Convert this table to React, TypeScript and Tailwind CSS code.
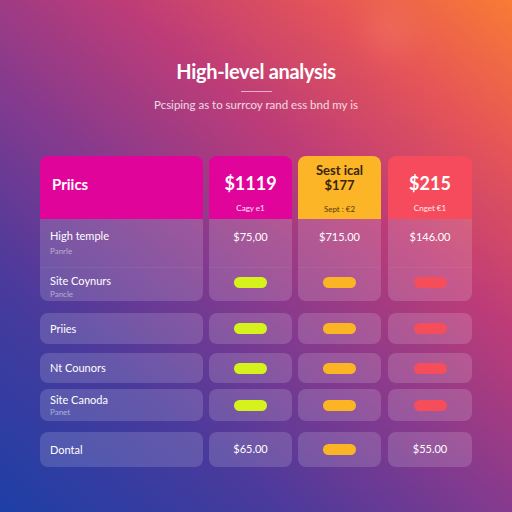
import React from "react";

type Cell = { kind: "text"; v: string } | { kind: "pill" };

const pillColors = ["bg-[#d6f21c]", "bg-[#fbb524]", "bg-[#f64d5a]"];

const rows: { label: string; sub?: string; cells: Cell[]; h: string; mt: string }[] = [
  { label: "Priies", cells: [{ kind: "pill" }, { kind: "pill" }, { kind: "pill" }], h: "h-[31px]", mt: "mt-[12px]" },
  { label: "Nt Counors", cells: [{ kind: "pill" }, { kind: "pill" }, { kind: "pill" }], h: "h-[30px]", mt: "mt-[9px]" },
  { label: "Site Canoda", sub: "Panet", cells: [{ kind: "pill" }, { kind: "pill" }, { kind: "pill" }], h: "h-[32px]", mt: "mt-[6px]" },
  { label: "Dontal", cells: [{ kind: "text", v: "$65.00" }, { kind: "pill" }, { kind: "text", v: "$55.00" }], h: "h-[35px]", mt: "mt-[11px]" },
];

function Pill({ i }: { i: number }) {
  return <div className={`w-[33px] h-[11px] rounded-full ${pillColors[i]}`} />;
}

export default function App() {
  const headers = [
    { bg: "bg-[#e1049b]", dark: false, lines: ["$1119"], sub: "Cagy e1" },
    { bg: "bg-[#fbb526]", dark: true, lines: ["Sest ical", "$177"], sub: "Sept : €2" },
    { bg: "bg-[#f64b5c]", dark: false, lines: ["$215"], sub: "Cnget €1" },
  ];
  const group1 = ["$75,00", "$715.00", "$146.00"];
  return (
    <div
      className="relative w-[512px] h-[512px] overflow-hidden text-white bg-[linear-gradient(40deg,#1d3fa6_0%,#4a3a9c_25%,#843a8e_45%,#bd3c78_65%,#e55458_83%,#f97b34_100%)]"
      style={{ fontFamily: "Lato, 'Open Sans', sans-serif" }}
    >
      <div className="absolute left-[365px] top-[5px] w-[50px] h-[50px] rounded-full bg-[#ff9a7a] opacity-20 blur-[14px]" />
      <div className="relative flex flex-col items-center pt-[58px]">
        <h1 className="text-[20px] leading-[26px] font-bold tracking-[-0.3px]">High-level analysis</h1>
        <div className="mt-[7px] w-[31px] h-[1px] bg-white/60" />
        <p className="mt-[6px] text-[11.5px] leading-[14px] text-white/80">Pcsiping as to surrcoy rand ess bnd my is</p>
      </div>
      <div className="relative ml-[40px] mt-[44px] flex gap-[6px]">
        <div className="w-[163px] flex flex-col">
          <div className="h-[63px] rounded-t-lg bg-[#e1049b] pl-[12px] pt-[16px]">
            <span className="text-[15px] font-bold">Priics</span>
          </div>
          <div className="h-[82px] rounded-b-lg bg-white/15 flex flex-col">
            <div className="h-[49px] pl-[10px] pt-[10px] border-b border-white/5">
              <div className="text-[11px] leading-[14px]">High temple</div>
              <div className="text-[8px] leading-[12px] mt-[2px] text-white/50">Panrle</div>
            </div>
            <div className="pl-[10px] pt-[6px]">
              <div className="text-[11px] leading-[14px]">Site Coynurs</div>
              <div className="text-[8px] leading-[10px] mt-[1px] text-white/50">Pancle</div>
            </div>
          </div>
          {rows.map((r) => (
            <div key={r.label} className={`${r.h} ${r.mt} rounded-lg bg-white/15 pl-[10px] flex flex-col justify-center`}>
              <div className="text-[11px] leading-[14px]">{r.label}</div>
              {r.sub && <div className="text-[8px] leading-[10px] text-white/50">{r.sub}</div>}
            </div>
          ))}
        </div>
        {headers.map((h, ci) => (
          <div key={ci} className={`${ci === 2 ? "w-[84px] ml-[1px]" : "w-[83px]"} flex flex-col`}>
            <div className={`h-[63px] rounded-t-lg ${h.bg} flex flex-col items-center ${h.dark ? "text-[#3a2410] pt-[7px]" : "pt-[15px]"}`}>
              {h.lines.length === 1 ? (
                <div className="text-[18px] leading-[24px] font-bold">{h.lines[0]}</div>
              ) : (
                <div className="text-[13px] leading-[15px] font-bold text-center">
                  {h.lines[0]}
                  <br />
                  {h.lines[1]}
                </div>
              )}
              <div className={`text-[8px] ${h.dark ? "mt-[10px] text-[#5a3a10]" : "mt-[7px] text-white/90"}`}>{h.sub}</div>
            </div>
            <div className="h-[82px] rounded-b-lg bg-white/15 flex flex-col">
              <div className="h-[49px] flex justify-center pt-[11px] text-[11px] leading-[14px] border-b border-white/5">
                {group1[ci]}
              </div>
              <div className="flex justify-center pt-[9px]">
                <Pill i={ci} />
              </div>
            </div>
            {rows.map((r) => {
              const c = r.cells[ci];
              return (
                <div key={r.label} className={`${r.h} ${r.mt} rounded-lg bg-white/15 flex items-center justify-center`}>
                  {c.kind === "pill" ? <Pill i={ci} /> : <span className="text-[11px]">{c.v}</span>}
                </div>
              );
            })}
          </div>
        ))}
      </div>
    </div>
  );
}
